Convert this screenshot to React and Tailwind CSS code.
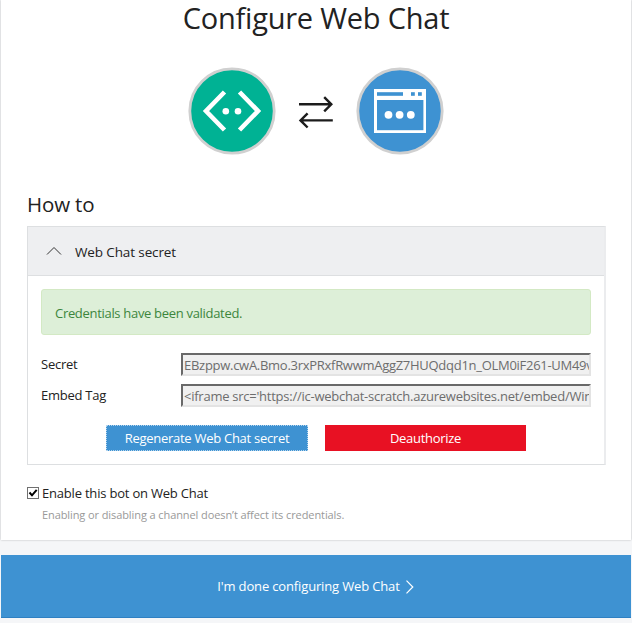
function BotIcon() {
  return (
    <svg width="88" height="88" viewBox="0 0 88 88">
      <circle cx="44" cy="44" r="42.2" fill="#00b294" stroke="#d0d0d0" strokeWidth="2.8" />
      <path d="M36.5 25 L18 44 L36.5 63 M51.5 25 L70 44 L51.5 63" fill="none" stroke="#fff" strokeWidth="4.6" />
      <circle cx="37.8" cy="44.2" r="3.3" fill="#fff" />
      <circle cx="50" cy="44.2" r="3.3" fill="#fff" />
    </svg>
  );
}

function SwapArrows() {
  return (
    <svg width="36" height="38" viewBox="0 0 36 38" fill="none" stroke="#1c1c1c" strokeWidth="2.4">
      <path d="M1 12.3 H33 M26.2 5.2 L33.3 12.3 L26.2 19.4" />
      <path d="M34.8 28.4 H3 M9.6 21.3 L2.5 28.4 L9.6 35.5" />
    </svg>
  );
}

function WebChatIcon() {
  return (
    <svg width="88" height="88" viewBox="0 0 88 88">
      <circle cx="44" cy="44" r="42.2" fill="#3e92d2" stroke="#d0d0d0" strokeWidth="2.8" />
      <rect x="18" y="22" width="52" height="44" fill="#fff" />
      <rect x="21" y="25.2" width="26" height="3.6" fill="#3e92d2" />
      <rect x="55" y="25.2" width="3.8" height="3.6" fill="#3e92d2" />
      <rect x="62" y="25.2" width="3.8" height="3.6" fill="#3e92d2" />
      <rect x="21" y="33" width="46.4" height="30.2" fill="#3e92d2" />
      <circle cx="32.5" cy="47.8" r="3.9" fill="#fff" />
      <circle cx="43.6" cy="47.8" r="3.9" fill="#fff" />
      <circle cx="54.8" cy="47.8" r="3.9" fill="#fff" />
    </svg>
  );
}

function Field({ label, value, tracking }) {
  return (
    <div className="flex h-[23px]">
      <label className="w-[140px] shrink-0 text-[13px] leading-[22px] tracking-[-0.25px]">{label}</label>
      <div className="w-[410px] overflow-hidden border-2 border-t-[#696969] border-r-[#e3e3e3] border-b-[#e3e3e3] border-l-[#696969] bg-[#f0f0f0] pl-px leading-[21px] whitespace-nowrap text-[#6d6d6d]">
        <span className={tracking}>{value}</span>
      </div>
    </div>
  );
}

export default function App() {
  return (
    <div className="h-[623px] w-[632px] overflow-hidden bg-[#f5f6f8] px-px font-['Open_Sans','Noto_Sans',sans-serif] text-[13px] text-[#222]">
      <main className="h-[540px] bg-white px-[26px] shadow-[0_0_2px_rgba(0,0,0,0.25)]">
        <h1 className="h-[66px] pt-px text-center text-[29px] leading-[34px] tracking-[-0.22px] whitespace-nowrap">Configure Web Chat</h1>
        <div className="flex h-[90px] items-center justify-center gap-[22px] pr-px">
          <BotIcon />
          <SwapArrows />
          <WebChatIcon />
        </div>
        <h2 className="mt-[34px] h-[36px] text-[20.5px] leading-[28px] tracking-[-0.15px]">How to</h2>
        <section className="h-[239px] w-[579px] border border-r-2 border-[#dddfe1] border-r-[#ebecee]">
          <header className="flex h-[49px] items-center border-b border-[#dddfe1] bg-[#eeeff1] pl-[18px]">
            <svg width="16" height="10" viewBox="0 0 16 10" fill="none" stroke="#333" strokeWidth="1">
              <path d="M1 8.5 L8 1.5 L15 8.5" />
            </svg>
            <span className="ml-[13px] pt-[3px] text-[13.5px] tracking-[-0.12px]">Web Chat secret</span>
          </header>
          <div className="px-[13px] pt-[13px]">
            <div className="h-[46px] w-[550px] rounded-[3px] border border-[#d3e9c4] bg-[#ddefd8] pl-[13px] leading-[46px] text-[#3c863d]">
              <span className="tracking-[-0.31px]">Credentials have been validated.</span>
            </div>
            <div className="mt-[18px] flex flex-col gap-2">
              <Field label="Secret" value="EBzppw.cwA.Bmo.3rxPRxfRwwmAggZ7HUQdqd1n_OLM0iF261-UM49v" tracking="tracking-[-0.28px]" />
              <Field label="Embed Tag" value="<iframe src='https://ic-webchat-scratch.azurewebsites.net/embed/Win" tracking="tracking-[-0.25px]" />
            </div>
            <div className="mt-[18px] flex gap-[17px] pl-[65px] text-white">
              <button className="h-[26px] w-[202px] border border-dotted border-[#b5d5ee] bg-[#3e92d2] leading-[24px] tracking-[-0.28px]">Regenerate Web Chat secret</button>
              <button className="h-[26px] w-[201px] bg-[#e81123] leading-[26px] tracking-[-0.3px]">Deauthorize</button>
            </div>
          </div>
        </section>
        <label className="mt-[18px] flex h-[21px] items-center">
          <svg width="12" height="12" viewBox="0 0 12 12" className="mb-[2px]">
            <rect x="0.5" y="0.5" width="11" height="11" fill="#fff" stroke="#707070" />
            <path d="M2.5 5.5 L5 8.3 L9.7 2.8" fill="none" stroke="#000" strokeWidth="2" />
          </svg>
          <span className="ml-[3px] tracking-[-0.2px]">Enable this bot on Web Chat</span>
        </label>
        <p className="mt-[3px] pl-[15px] text-[11px] leading-[16px] tracking-[-0.09px] text-[#999]">Enabling or disabling a channel doesn’t affect its credentials.</p>
      </main>
      <button className="mt-[15px] flex h-[63px] w-[630px] items-center justify-center border-b border-[#2f80c2] bg-[#3e92d2] pt-[2px] text-white">
        <span className="tracking-[-0.15px]">I'm done configuring Web Chat</span>
        <svg width="10" height="14" viewBox="0 0 10 14" className="ml-[5px]" fill="none" stroke="#fff" strokeWidth="1.2">
          <path d="M1.5 0.7 L7.8 7 L1.5 13.3" />
        </svg>
      </button>
    </div>
  );
}
